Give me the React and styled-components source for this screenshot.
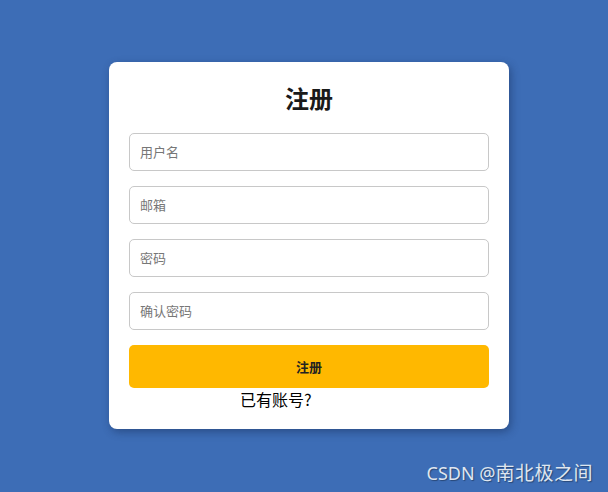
import React from "react";
import styled, { createGlobalStyle } from "styled-components";

const Global = createGlobalStyle`
  html, body { margin: 0; padding: 0; }
  body {
    background: #3d6db6;
    font-family: "Noto Sans CJK SC", "Noto Sans", sans-serif;
  }
`;

const Page = styled.div`
  position: relative;
  height: 492px;
  display: flex;
  align-items: flex-start;
  padding: 62px 0 0 109px;
  box-sizing: border-box;
`;

const Card = styled.form`
  width: 400px;
  box-sizing: border-box;
  background: #fff;
  border-radius: 8px;
  padding: 20px 20px 19px;
  box-shadow: 2px 3px 8px rgba(20, 40, 80, 0.45);
  display: flex;
  flex-direction: column;
`;

const Title = styled.h2`
  margin: 0 0 19px;
  text-align: center;
  font-size: 24px;
  line-height: 32px;
  font-weight: 700;
  color: #1a1a1a;
`;

const Field = styled.input`
  display: block;
  width: 360px;
  height: 38px;
  box-sizing: border-box;
  margin: 0 0 15px;
  padding: 0 10px 2px;
  border: 1px solid #c8c8c8;
  border-radius: 5px;
  font-family: "Noto Sans CJK SC", sans-serif;
  font-size: 13px;
  outline: none;
  &::placeholder { color: #777; }
`;

const Submit = styled.button`
  width: 360px;
  height: 43px;
  border: none;
  border-radius: 5px;
  background: #ffb800;
  color: #222;
  font-family: "Noto Sans CJK SC", sans-serif;
  font-size: 13px;
  font-weight: 700;
  cursor: pointer;
`;

const Footer = styled.div`
  padding-left: 111px;
  font-size: 16px;
  line-height: 22px;
  color: #000;
`;

const Watermark = styled.div`
  position: absolute;
  right: 15px;
  bottom: 7px;
  font-family: "Noto Sans", "Noto Sans CJK SC", sans-serif;
  font-size: 18px;
  line-height: 24px;
  color: #dfe6f0;
  text-shadow: 1px 1px 1px rgba(0, 0, 0, 0.35);
  white-space: nowrap;
`;

const WatermarkCjk = styled.span`
  font-family: "Noto Sans CJK SC", sans-serif;
  font-size: 19px;
  letter-spacing: 0.5px;
`;

export default function App() {
  return (
    <>
      <Global />
      <Page>
        <Card onSubmit={(e) => e.preventDefault()}>
          <Title>注册</Title>
          <Field placeholder="用户名" />
          <Field placeholder="邮箱" />
          <Field type="password" placeholder="密码" />
          <Field type="password" placeholder="确认密码" />
          <Submit type="submit">注册</Submit>
          <Footer>已有账号?</Footer>
        </Card>
        <Watermark>
          CSDN @<WatermarkCjk>南北极之间</WatermarkCjk>
        </Watermark>
      </Page>
    </>
  );
}
